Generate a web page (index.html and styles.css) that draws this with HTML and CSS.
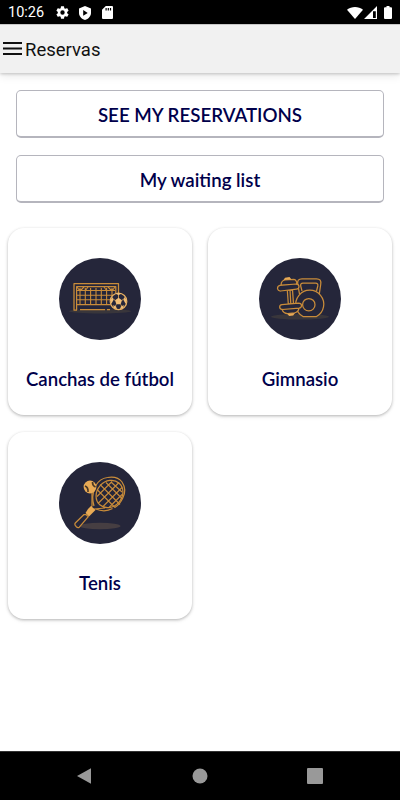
FILE: index.html
```html
<!DOCTYPE html>
<html lang="es">
<head>
<meta charset="utf-8">
<meta name="viewport" content="width=device-width, initial-scale=1">
<title>Reservas</title>
<link rel="stylesheet" href="styles.css">
</head>
<body>
<div class="status">
  <span class="clock">10:26</span>
  <svg class="gear" viewBox="0 0 24 24"><path d="M19.4 13a7.500 7.500 0 0 0 0-2l2.100-1.650a.5.5 0 0 0 .12-.64l-2-3.460a.5.5 0 0 0-.61-.22l-2.490 1a7.300 7.300 0 0 0-1.690-.98l-.38-2.650A.49.49 0 0 0 14 2h-4a.49.49 0 0 0-.49.42l-.38 2.650a7.700 7.700 0 0 0-1.690.98l-2.490-1a.5.5 0 0 0-.61.22l-2 3.460a.5.5 0 0 0 .12.64L4.570 11a8 8 0 0 0 0 2l-2.110 1.650a.5.5 0 0 0-.12.64l2 3.460c.12.22.39.3.61.22l2.490-1c.52.4 1.080.73 1.690.98l.38 2.650c.03.24.24.4.49.4h4c.25 0 .46-.18.49-.42l.38-2.650a7.300 7.300 0 0 0 1.690-.98l2.490 1c.23.09.49 0 .61-.22l2-3.460a.5.5 0 0 0-.12-.64zM12 15.500a3.500 3.500 0 1 1 0-7 3.500 3.500 0 0 1 0 7z"/></svg>
  <svg class="shield" viewBox="0 0 12 14"><path fill-rule="evenodd" d="M6 0l6 2.400V7c0 3.200-2.500 6-6 7-3.500-1-6-3.800-6-7V2.400zM4.200 4v5.800L8.700 7z"/></svg>
  <svg class="card-icon" viewBox="0 0 11 13"><path fill-rule="evenodd" d="M3.800 0H10q1 0 1 1v11q0 1-1 1H1q-1 0-1-1V3.800zM3.500 2v2.500h1.200V2zM5.700 2v2.500h1.200V2zM7.900 2v2.500h1.200V2z"/></svg>
  <div class="signals">
    <svg class="wifi" viewBox="0 0 16 12"><path d="M0 2.800C4.500-.9 11.500-.9 16 2.800L8 12z"/></svg>
    <svg class="cell" viewBox="0 0 13 13"><path fill-rule="evenodd" d="M0 13L13 0v13zM9 5.300V12h2.800V5.300z"/></svg>
    <svg class="battery" viewBox="0 0 8 13"><path d="M2.500 0h3v1.300H7q1 0 1 1V12q0 1-1 1H1q-1 0-1-1V2.300q0-1 1-1h1.500z"/></svg>
  </div>
</div>
<header class="toolbar">
  <svg class="menu" viewBox="0 0 19 13"><path d="M0 1h19M0 6.500h19M0 12h19"/></svg>
  <h1>Reservas</h1>
</header>
<main>
  <div class="actions">
    <button>SEE MY RESERVATIONS</button>
    <button>My waiting list</button>
  </div>
  <div class="grid">
    <section class="card">
      <svg class="sport" viewBox="9 8 82 82">
        <circle class="disc" cx="50" cy="49" r="41"/>
        <ellipse class="shade" cx="50" cy="61.200" rx="31" ry="2.200"/>
        <path class="net" d="M30 38v17M35.300 38v17M40.600 38v17M46 38v17M51.300 38v17M56.600 38v17M62 38v8M27 40.500h38M27 45.200h35M27 49.800h33M27 54.600h33M27 37l3 4 4-4M65 37l-3 4-4-4M38 37l-3 4M54 37l3 4"/>
        <path class="line" d="M24 60V33.700h44.500V43M26.600 60V36.500h39.200V43M23.500 60h3.500M30 59.700h25M57 59.700h3"/>
        <circle class="ball" cx="68.500" cy="51.400" r="8.300"/>
        <path class="ball-gold" d="M68.500 47.800l3.500 2.500-1.400 4h-4.200l-1.400-4zM65.500 43.500l3 1.800 3-1.800-3-.8zM60.500 50l2-3 1 3-2.200 4zM76.500 50l-2-3-1 3 2.200 4zM64 58.300l-1-3 3 1 1 3zM73 58.300l1-3-3 1-1 3z"/>
        <path class="seam" d="M68.500 48v-3M72 50.300l2-1.500M70.600 54.300l1.500 2.500M66.400 54.300l-1.500 2.500M65 50.300l-2-1.500"/>
      </svg>
      <h2>Canchas de fútbol</h2>
    </section>
    <section class="card">
      <svg class="sport" viewBox="9 8 82 82">
        <circle class="disc" cx="50" cy="49" r="41"/>
        <ellipse class="shade" cx="50" cy="66.800" rx="29" ry="2.800"/>
        <path class="line" d="M49.500 44l-1.700-9.500q-1-5.700 4.200-5.700h14.500q5.200 0 4.200 5.700L69.300 44"/>
        <path class="line" d="M52 41l-1.300-5q-.5-2.800 2.200-2.800h12.700q2.700 0 2.200 2.800l-1.300 5"/>
        <path class="line fill" d="M53 66.500a14 14 0 1 1 13.500 0z"/>
        <circle class="line" cx="58.800" cy="54.700" r="6.200"/>
        <path class="line fill" d="M37.300 40l1 14h5.200l-1-14zM40 40l.8 14"/>
        <path class="line fill" d="M31 35q.3-4.500 4-5l8.500-.7q3 0 3.500 4.700zM30 35.300l16-1.300q3 0 3 2.500t-2.500 2.700L30.500 41Q28 41 27.500 38.500q0-2.800 2.500-3.200zM32 54.700l16.500-1.500q3 0 3 2.300t-2.500 2.700L33 59.500q-3 0-3.300-2.200-.2-2.300 2.300-2.600zM32 59.500l17-1.300q-.5 4-4.500 4.700l-7 .6q-4 0-5.500-4z"/>
        <path class="gold" d="M33.500 30l1.500-2.300 4.500-.7 2 2.500zM37 63.800l8-.9-1.800 2.700-4 .5z"/>
      </svg>
      <h2>Gimnasio</h2>
    </section>
    <section class="card">
      <svg class="sport" viewBox="9 7 82 82">
        <circle class="disc" cx="50" cy="48" r="41"/>
        <ellipse class="shade solid" cx="50" cy="71" rx="20.500" ry="3.300"/>
        <path class="line" d="M42 38v13l-5 7M55 53l-11 1-5 5M62.500 53.500q-7.500 4.300-17 .5"/>
        <path class="gold" d="M38 54l3-3 4.500 4-6.500 6.500-3.500-3.500z"/>
        <path class="line fill" d="M36 59.500l2.300 2.200-9 10.500q-1.500 1-3-.5l-1-1.200q-1-1.300 0-2.500l8.700-8.500z"/>
        <path class="net" d="M47 34.500l18 18M50 29.500l20 20M56 27.500l16 16M61 27l11 10M47 41.500l15-15M48 48.500l21-21M53 51.500l19-19M59 52.500l13-13"/>
        <g transform="rotate(-48 59.500 39)"><ellipse class="line" cx="59.500" cy="39" rx="14.500" ry="12.500"/></g>
        <path class="line" d="M45.500 31q4-7.500 12-8.500 10-1.700 14.500 4.500 5 7.500.8 16-3 6.500-8 9.500M45 32q-4 10-1 19"/>
        <circle class="ball-solid" cx="40" cy="32" r="6.400"/>
        <path class="seam-dark" d="M35 31q3.500 1.500 3 6M42.500 27q-.2 3.500 3 5"/>
      </svg>
      <h2>Tenis</h2>
    </section>
  </div>
</main>
<nav class="system">
  <svg viewBox="0 0 16 18"><path d="M15 1.200v15.500L1 9z"/></svg>
  <svg viewBox="0 0 16 18"><circle cx="8" cy="9" r="7.500"/></svg>
  <svg viewBox="0 0 16 18"><rect y="1" width="16" height="16" rx="1"/></svg>
</nav>
</body>
</html>
```
FILE: styles.css
```css
* { box-sizing: border-box; }
body {
  margin: 0;
  height: 800px;
  display: flex;
  flex-direction: column;
  background: #fff;
  font-family: Lato, sans-serif;
  color: #00004b;
  overflow: hidden;
}
svg { display: block; flex: none; }
.status {
  height: 24px;
  flex: none;
  display: flex;
  align-items: center;
  padding: 1px 8px 0;
  background: #000;
  color: #fff;
  fill: #fff;
  font-family: Roboto, sans-serif;
}
.clock { width: 47px; padding-top: 1px; font-size: 14.500px; line-height: 20px; }
.gear { width: 15px; height: 15px; }
.shield { width: 12px; height: 14px; margin-left: 9px; }
.card-icon { width: 11px; height: 13px; margin-left: 11px; }
.signals { display: flex; align-items: center; margin-left: auto; }
.wifi { width: 16px; height: 12px; }
.cell { width: 13px; height: 13px; margin-left: 1px; }
.battery { width: 8px; height: 13px; margin-left: 7px; }
.toolbar {
  height: 49px;
  flex: none;
  display: flex;
  align-items: center;
  padding-left: 3px;
  background: #f1f1f1;
  border-top: 1px solid #c8c8c8;
  box-shadow: 0 1px 3px rgba(0, 0, 0, .2), 0 3px 9px rgba(0, 0, 0, .09);
}
.menu { width: 19px; height: 13px; stroke: #111; stroke-width: 1.900; margin-bottom: 2px; }
h1 {
  margin: 1px 0 0 3px;
  color: #111;
  font: 400 18.500px/24px Roboto, sans-serif;
}
main { flex: 1; padding-top: 17px; }
.actions { display: grid; gap: 17px; padding: 0 16px; }
button {
  height: 48px;
  padding: 2px 0 0;
  background: #fff;
  border: 1px solid #b5b5bd;
  border-bottom-width: 2px;
  border-radius: 5px;
  font: 600 18.700px/24px Lato, sans-serif;
  color: inherit;
}
.grid {
  display: grid;
  grid-template-columns: 1fr 1fr;
  gap: 17px 16px;
  padding: 25px 8px 0;
}
.card {
  height: 187px;
  display: flex;
  flex-direction: column;
  align-items: center;
  padding-top: 30px;
  background: #fff;
  border-radius: 16px;
  box-shadow: 0 1px 3px rgba(0, 0, 0, .26), 0 2px 5px rgba(0, 0, 0, .05);
}
.sport { width: 82px; height: 82px; }
h2 { margin: 27px 0 0; font: 600 18.600px/24px Lato, sans-serif; }
.disc { fill: #25263a; }
.shade { fill: #39363b; }
.shade.solid { fill: #463e42; }
.line, .net, .seam, .ball, .seam-dark {
  fill: none;
  stroke: #c98c3a;
  stroke-width: 1.250;
  stroke-linejoin: round;
}
.line.fill { fill: #25263a; }
.net { stroke-width: 1.100; }
.ball { fill: #25263a; stroke: #e5ae61; }
.seam { stroke: #e5ae61; stroke-width: .8; }
.gold, .ball-solid { fill: #e8aa55; }
.ball-gold { fill: #efbd76; }
.seam-dark { stroke: #493724; stroke-width: 1.600; }
.system {
  height: 49px;
  flex: none;
  display: flex;
  justify-content: center;
  align-items: center;
  gap: 99.500px;
  padding-right: 1px;
  background: #000;
  border-top: 1px solid #333;
  fill: #999;
}
.system svg { width: 16px; height: 18px; }
```
